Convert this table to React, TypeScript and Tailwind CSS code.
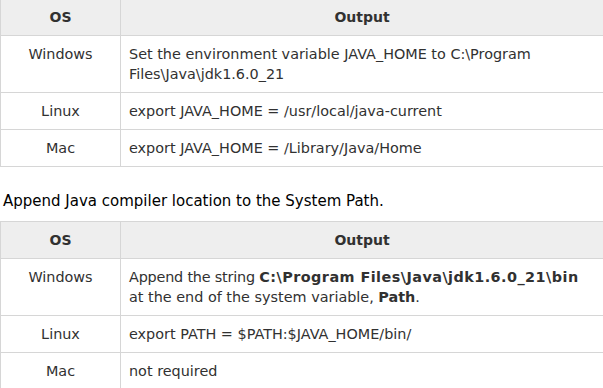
import React from "react";

const font = { fontFamily: '"DejaVu Sans", Verdana, sans-serif' };

function Row({ os, children }: { os: string; children: React.ReactNode }) {
  return (
    <tr>
      <td className="border border-[#d6d6d6] w-[120px] text-center align-top px-2 pt-[8px] pb-[8px] leading-[20px]">{os}</td>
      <td className="border border-[#d6d6d6] align-top pl-[8px] pr-2 pt-[8px] pb-[8px] leading-[20px] whitespace-nowrap">{children}</td>
    </tr>
  );
}

function Header() {
  return (
    <tr className="bg-[#eeeeee]">
      <th className="border border-[#d6d6d6] w-[120px] text-center font-bold h-[37px] text-[14px] text-[#313131]">OS</th>
      <th className="border border-[#d6d6d6] text-center font-bold h-[37px] text-[14px] text-[#313131] pr-[36px]">Output</th>
    </tr>
  );
}

export default function App() {
  return (
    <div className="w-[603px] h-[388px] overflow-hidden bg-white text-[14.4px] text-[#313131]" style={font}>
      <div className="-mt-[2px]">
        <table className="border-collapse w-[640px] table-fixed">
          <colgroup>
            <col className="w-[120px]" />
            <col />
          </colgroup>
          <thead><Header /></thead>
          <tbody>
            <Row os="Windows">
              Set the environment variable JAVA_HOME to C:\Program<br />Files\Java\jdk1.6.0_21
            </Row>
            <Row os="Linux">export JAVA_HOME = /usr/local/java-current</Row>
            <Row os="Mac">export JAVA_HOME = /Library/Java/Home</Row>
          </tbody>
        </table>
        <p className="mt-[24px] mb-[10px] pl-[3px] leading-[20px] text-[15px] text-black">
          Append Java compiler location to the System Path.
        </p>
        <table className="border-collapse w-[640px] table-fixed">
          <colgroup>
            <col className="w-[120px]" />
            <col />
          </colgroup>
          <thead><Header /></thead>
          <tbody>
            <Row os="Windows">
              <span className="tracking-[-0.2px]">Append the string </span>
              <b className="tracking-[0.45px]">C:\Program Files\Java\jdk1.6.0_21\bin</b>
              <br />at the end of the system variable, <b>Path</b>.
            </Row>
            <Row os="Linux">export PATH = $PATH:$JAVA_HOME/bin/</Row>
            <Row os="Mac">not required</Row>
          </tbody>
        </table>
      </div>
    </div>
  );
}
